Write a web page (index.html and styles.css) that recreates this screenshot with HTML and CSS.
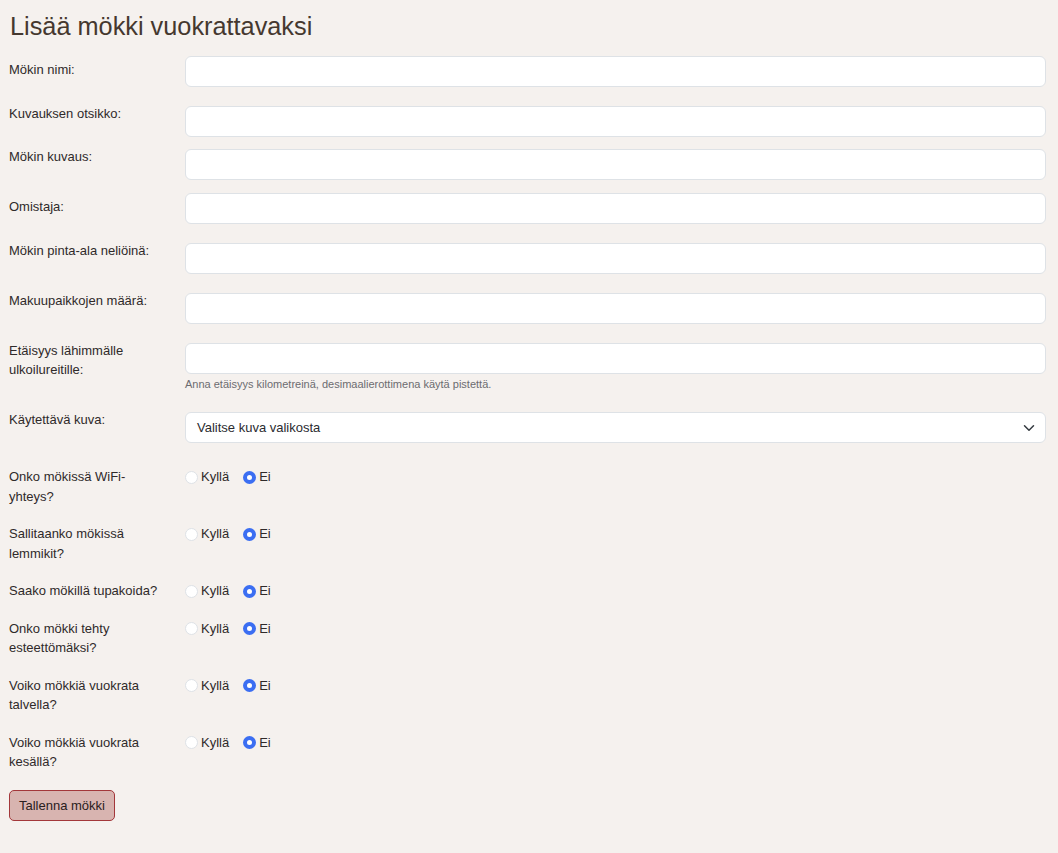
FILE: index.html
```html
<!DOCTYPE html>
<html lang="fi">
<head>
<meta charset="utf-8">
<title>Lisää mökki vuokrattavaksi</title>
<link rel="stylesheet" href="styles.css">
</head>
<body>
<main class="page">
  <h1 class="title">Lisää mökki vuokrattavaksi</h1>
  <form class="form">
    <div class="row row-a">
      <label class="label label-low">Mökin nimi:</label>
      <div class="field"><input class="input" type="text"></div>
    </div>
    <div class="row row-b">
      <label class="label">Kuvauksen otsikko:</label>
      <div class="field"><input class="input" type="text"></div>
    </div>
    <div class="row row-b2">
      <label class="label">Mökin kuvaus:</label>
      <div class="field"><input class="input" type="text"></div>
    </div>
    <div class="row row-a">
      <label class="label label-low">Omistaja:</label>
      <div class="field"><input class="input" type="text"></div>
    </div>
    <div class="row row-a">
      <label class="label">Mökin pinta-ala neliöinä:</label>
      <div class="field"><input class="input" type="text"></div>
    </div>
    <div class="row row-a">
      <label class="label">Makuupaikkojen määrä:</label>
      <div class="field"><input class="input" type="text"></div>
    </div>
    <div class="row row-c">
      <label class="label">Etäisyys lähimmälle ulkoilureitille:</label>
      <div class="field">
        <input class="input" type="text">
        <div class="hint">Anna etäisyys kilometreinä, desimaalierottimena käytä pistettä.</div>
      </div>
    </div>
    <div class="row row-d">
      <label class="label">Käytettävä kuva:</label>
      <div class="field">
        <div class="select">
          <span>Valitse kuva valikosta</span>
          <svg class="chev" width="12" height="12" viewBox="0 0 16 16"><path d="M2 5l6 6 6-6" fill="none" stroke="#343a40" stroke-width="2" stroke-linecap="round" stroke-linejoin="round"/></svg>
        </div>
      </div>
    </div>

    <div class="rrow">
      <div class="rlabel">Onko mökissä WiFi-yhteys?</div>
      <div class="radios">
        <span class="opt"><span class="radio"></span>Kyllä</span>
        <span class="opt"><span class="radio on"></span>Ei</span>
      </div>
    </div>
    <div class="rrow">
      <div class="rlabel">Sallitaanko mökissä lemmikit?</div>
      <div class="radios">
        <span class="opt"><span class="radio"></span>Kyllä</span>
        <span class="opt"><span class="radio on"></span>Ei</span>
      </div>
    </div>
    <div class="rrow">
      <div class="rlabel">Saako mökillä tupakoida?</div>
      <div class="radios">
        <span class="opt"><span class="radio"></span>Kyllä</span>
        <span class="opt"><span class="radio on"></span>Ei</span>
      </div>
    </div>
    <div class="rrow">
      <div class="rlabel">Onko mökki tehty esteettömäksi?</div>
      <div class="radios">
        <span class="opt"><span class="radio"></span>Kyllä</span>
        <span class="opt"><span class="radio on"></span>Ei</span>
      </div>
    </div>
    <div class="rrow">
      <div class="rlabel">Voiko mökkiä vuokrata talvella?</div>
      <div class="radios">
        <span class="opt"><span class="radio"></span>Kyllä</span>
        <span class="opt"><span class="radio on"></span>Ei</span>
      </div>
    </div>
    <div class="rrow">
      <div class="rlabel">Voiko mökkiä vuokrata kesällä?</div>
      <div class="radios">
        <span class="opt"><span class="radio"></span>Kyllä</span>
        <span class="opt"><span class="radio on"></span>Ei</span>
      </div>
    </div>

    <button class="btn" type="button">Tallenna mökki</button>
  </form>
</main>
</body>
</html>
```

FILE: styles.css
```css
html, body {
  margin: 0;
  padding: 0;
  background: #f5f1ee;
}
body {
  font-family: "Liberation Sans", Arial, sans-serif;
  color: #2f2a2a;
  font-size: 13px;
}
.page {
  padding: 10px 12px 30px 9px;
}
.title {
  margin: 0 0 14px 1px;
  font-size: 25.3px;
  font-weight: 400;
  color: #45382f;
  line-height: 32px;
}
.form {
  display: flex;
  flex-direction: column;
}
.row {
  display: flex;
  align-items: flex-start;
}
.row-a { margin-bottom: 19px; }
.row-b { margin-bottom: 12px; }
.row-b2 { margin-bottom: 13px; }
.row-c { margin-bottom: 21px; }
.row-d { margin-bottom: 24px; }
.label {
  width: 176px;
  flex: none;
  margin-top: -2px;
  padding-right: 16px;
  box-sizing: border-box;
  line-height: 19px;
  color: #2f2a2a;
}
.label-low { padding-top: 6px; }
.field {
  flex: 1;
  min-width: 0;
}
.input {
  display: block;
  width: 100%;
  box-sizing: border-box;
  height: 31px;
  border: 1px solid #dee2e6;
  border-radius: 6px;
  background: #fff;
  margin: 0;
  font: inherit;
}
.hint {
  margin-top: 3px;
  font-size: 11px;
  color: #6c6c70;
  line-height: 14px;
}
.select {
  display: flex;
  align-items: center;
  justify-content: space-between;
  height: 31px;
  box-sizing: border-box;
  border: 1px solid #dee2e6;
  border-radius: 6px;
  background: #fff;
  padding: 0 10px 0 11px;
  color: #2b2b30;
}
.rrow {
  display: flex;
  align-items: flex-start;
  margin-bottom: 18px;
}
.rlabel {
  width: 176px;
  flex: none;
  padding-right: 16px;
  box-sizing: border-box;
  line-height: 19.5px;
}
.radios {
  display: flex;
  gap: 14px;
  line-height: 19.5px;
}
.opt {
  display: inline-flex;
  align-items: center;
  gap: 3px;
}
.radio {
  width: 13px;
  height: 13px;
  box-sizing: border-box;
  border-radius: 50%;
  border: 1px solid #dee2e6;
  background: #fff;
  margin-top: 1px;
}
.radio.on {
  border: 4px solid #3b6ef2;
  background: #fff;
}
.btn {
  align-self: flex-start;
  margin-top: 0;
  height: 31px;
  padding: 0 9px;
  font: inherit;
  color: #2a2020;
  background: #d8b4b0;
  border: 1px solid #a3373a;
  border-radius: 5px;
}
```
